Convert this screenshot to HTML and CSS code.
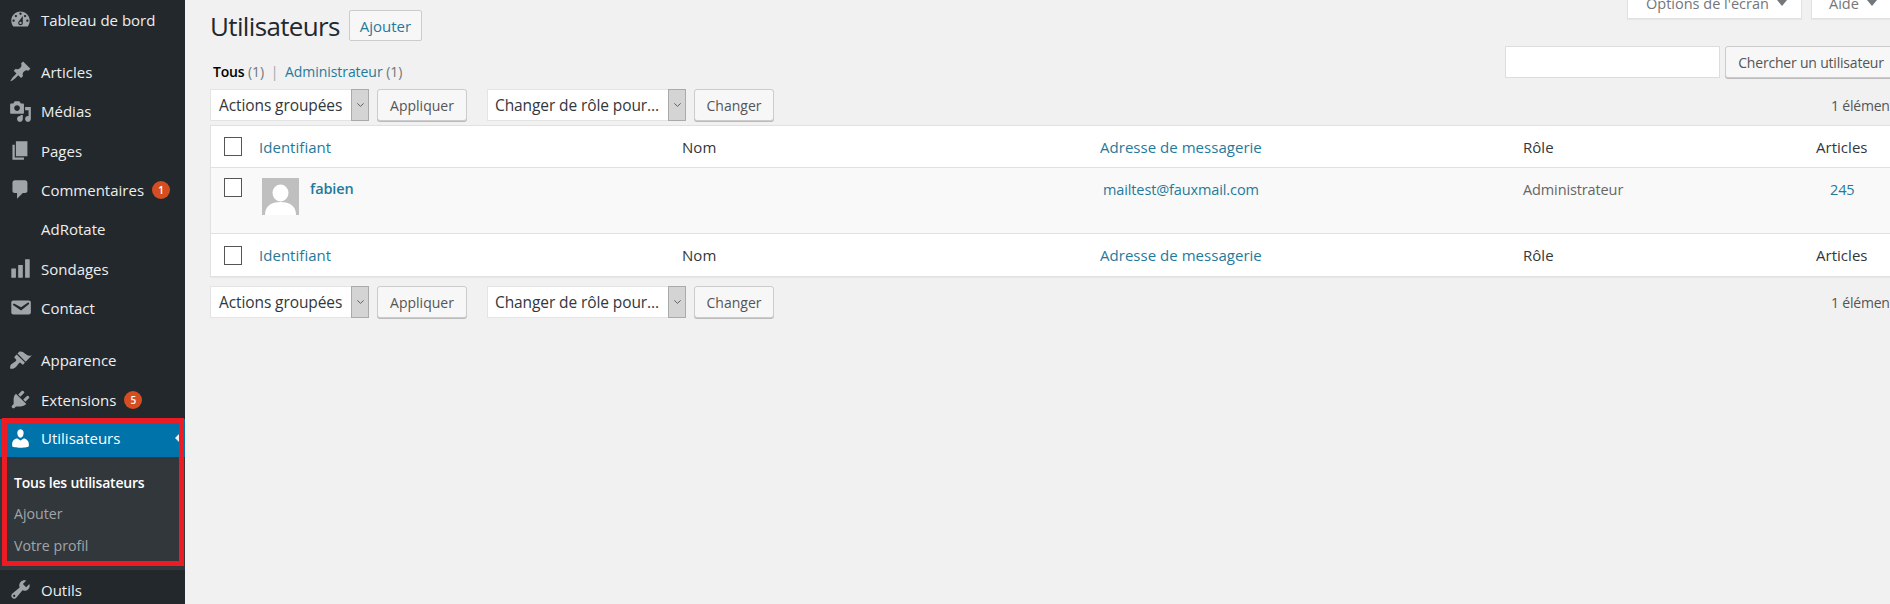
FILE: index.html
```html
<!DOCTYPE html>
<html lang="fr">
<head>
<meta charset="utf-8">
<title>Utilisateurs</title>
<link rel="stylesheet" href="styles.css">
</head>
<body>
<div class="page">
  <nav class="sidebar">
    <ul class="menu">
      <li class="item sep-after"><svg class="ic" viewBox="0 0 20 20"><path d="M3.76 16h12.48c1.1-1.37 1.76-3.11 1.76-5 0-4.42-3.58-8-8-8s-8 3.58-8 8c0 1.89.66 3.63 1.76 5zM10 4c.55 0 1 .45 1 1s-.45 1-1 1-1-.45-1-1 .45-1 1-1zM6 6c.55 0 1 .45 1 1s-.45 1-1 1-1-.45-1-1 .45-1 1-1zm8 0c.55 0 1 .45 1 1s-.45 1-1 1-1-.45-1-1 .45-1 1-1zm-5.37 5.55L12 7v6c0 1.1-.9 2-2 2s-2-.9-2-2c0-.57.24-1.08.63-1.45zM4 10c.55 0 1 .45 1 1s-.45 1-1 1-1-.45-1-1 .45-1 1-1zm12 0c.55 0 1 .45 1 1s-.45 1-1 1-1-.45-1-1 .45-1 1-1zm-5 3c0-.55-.45-1-1-1s-1 .45-1 1 .45 1 1 1 1-.45 1-1z"/></svg><span>Tableau de bord</span></li>
      <li class="item"><svg class="ic" viewBox="0 0 20 20"><path d="M10.44 3.02l1.82-1.82 6.36 6.35-1.83 1.82c-1.05-.68-2.48-.57-3.41.36l-.75.75c-.92.93-1.04 2.35-.35 3.41l-1.83 1.82-2.41-2.41-2.8 2.79c-.42.42-3.38 2.71-3.8 2.29s1.86-3.39 2.28-3.81l2.79-2.79L4.1 9.36l1.83-1.82c1.05.69 2.48.57 3.4-.36l.75-.75c.93-.92 1.05-2.35.36-3.41z"/></svg><span>Articles</span></li>
      <li class="item"><svg class="ic" viewBox="0 0 20 20"><path d="M13 11V4c0-.55-.45-1-1-1h-1.67L9 1H5L3.67 3H2c-.55 0-1 .45-1 1v7c0 .55.45 1 1 1h10c.55 0 1-.45 1-1zM7 4.500c1.38 0 2.500 1.12 2.500 2.500S8.380 9.500 7 9.500 4.500 8.380 4.500 7 5.620 4.500 7 4.500zM14 6h5v10.500c0 1.380-1.120 2.500-2.500 2.500S14 17.880 14 16.500s1.120-2.500 2.500-2.500c.17 0 .34.02.5.05V9h-3V6zm-4 8.050V13h2v3.500c0 1.380-1.120 2.500-2.500 2.500S7 17.880 7 16.500 8.120 14 9.500 14c.17 0 .34.02.5.05z"/></svg><span>Médias</span></li>
      <li class="item"><svg class="ic" viewBox="0 0 20 20"><path d="M6 15V2h10v13H6zm-1 1h8v2H3V5h2v11z"/></svg><span>Pages</span></li>
      <li class="item"><svg class="ic" viewBox="0 0 20 20"><path d="M5 2h9c1.1 0 2 .9 2 2v7c0 1.1-.9 2-2 2h-2l-5 5v-5H5c-1.1 0-2-.9-2-2V4c0-1.1.9-2 2-2z"/></svg><span>Commentaires</span><b class="badge">1</b></li>
      <li class="item"><span class="ic-blank"></span><span>AdRotate</span></li>
      <li class="item"><svg class="ic" viewBox="0 0 20 20"><path d="M18 18V2h-4v16h4zm-6 0V7H8v11h4zm-6 0v-8H2v8h4z"/></svg><span>Sondages</span></li>
      <li class="item sep-after"><svg class="ic" viewBox="0 0 20 20"><path d="M3.87 4h13.25C18.37 4 19 4.59 19 5.79v8.42c0 1.19-.63 1.79-1.88 1.79H3.87c-1.25 0-1.88-.6-1.88-1.79V5.79c0-1.2.63-1.79 1.88-1.79zm6.62 8.6l6.74-5.53c.24-.2.43-.66.13-1.07-.29-.41-.82-.42-1.17-.17l-5.7 3.86L4.8 6.83c-.35-.25-.88-.24-1.17.17-.3.41-.11.87.13 1.07z"/></svg><span>Contact</span></li>
      <li class="item"><svg class="ic" viewBox="0 0 20 20"><path d="M14.48 11.06L7.41 3.99l1.5-1.5c.5-.56 2.3-.47 3.51.32 1.21.8 1.43 1.28 2.91 2.1 1.18.64 2.45 1.26 4.45.85zm-.71.71L6.7 4.7 4.93 6.47c-.39.39-.39 1.02 0 1.41l1.06 1.06c.39.39.39 1.03 0 1.42-.6.6-1.43 1.11-2.21 1.69-.35.26-.7.53-1.01.84C1.43 13.23.64 15.03 1.08 17.11c2.08.44 3.88-.35 5.22-1.69.31-.31.58-.66.84-1.01.58-.78 1.09-1.61 1.69-2.21.39-.39 1.03-.39 1.42 0l1.06 1.06c.39.39 1.02.39 1.41 0z"/></svg><span>Apparence</span></li>
      <li class="item"><svg class="ic" viewBox="0 0 20 20"><path d="M13.11 4.36L9.87 7.6 8 5.73l3.24-3.24c.35-.34 1.05-.2 1.56.32.52.51.66 1.21.31 1.55zm-8 1.77l.91-1.12 9.01 9.01-1.19.84c-.71.71-2.63 1.16-3.82 1.16H6.14L4.9 17.26c-.59.59-1.54.59-2.12 0-.59-.58-.59-1.53 0-2.12l1.24-1.24v-3.88c0-1.13.4-3.19 1.09-3.89zm7.26 3.97l3.24-3.24c.34-.35 1.04-.21 1.55.31.52.51.66 1.21.31 1.55l-3.24 3.25z"/></svg><span>Extensions</span><b class="badge">5</b></li>
      <li class="item current"><svg class="ic" viewBox="0 0 20 20"><path d="M10 9.25c-2.27 0-2.73-3.44-2.73-3.44C7 4.02 7.82 2 9.97 2c2.16 0 2.98 2.02 2.71 3.81 0 0-.41 3.44-2.68 3.44zm0 2.57L12.72 10c2.39 0 4.52 2.33 4.52 4.53v2.49s-3.65 1.13-7.24 1.13c-3.65 0-7.24-1.13-7.24-1.13v-2.49c0-2.25 1.94-4.48 4.47-4.48z"/></svg><span>Utilisateurs</span><i class="pointer"></i></li>
      <li class="sub">
        <a class="sub-link on">Tous les utilisateurs</a>
        <a class="sub-link">Ajouter</a>
        <a class="sub-link">Votre profil</a>
      </li>
      <li class="item"><svg class="ic" viewBox="0 0 20 20"><path d="M16.68 9.77c-1.34 1.34-3.3 1.67-4.95.99l-5.41 6.52c-.99.99-2.59.99-3.58 0s-.99-2.59 0-3.57l6.52-5.42c-.68-1.65-.35-3.61.99-4.95 1.28-1.28 3.12-1.62 4.72-1.06l-2.89 2.89 2.82 2.82 2.86-2.87c.53 1.58.18 3.39-1.08 4.65zM3.81 16.21c.4.39 1.04.39 1.43 0 .4-.4.4-1.04 0-1.43-.39-.4-1.03-.4-1.43 0-.39.39-.39 1.03 0 1.43z"/></svg><span>Outils</span></li>
    </ul>
    <div class="highlight"></div>
  </nav>

  <main class="main">
    <header class="head">
      <div class="title-group">
        <h1 class="title">Utilisateurs</h1>
        <a class="add-btn">Ajouter</a>
      </div>
      <div class="tabs">
        <div class="tab tab-options">Options de l'écran <i class="caret"></i></div>
        <div class="tab tab-help">Aide <i class="caret"></i></div>
      </div>
    </header>

    <div class="filter-row">
      <div class="views"><strong>Tous</strong> <span class="count">(1)</span> <span class="pipe">|</span> <a class="link">Administrateur</a> <span class="count">(1)</span></div>
      <div class="search">
        <div class="search-input"></div>
        <div class="btn btn-search">Chercher un utilisateur</div>
      </div>
    </div>

    <div class="tablenav">
      <div class="select sel-bulk"><span>Actions groupées</span><i class="sel-arrow"><svg viewBox="0 0 10 6"><path d="M1.5 1.2 5 4.5l3.5-3.3"/></svg></i></div>
      <div class="btn btn-apply">Appliquer</div>
      <div class="select sel-role"><span>Changer de rôle pour…</span><i class="sel-arrow"><svg viewBox="0 0 10 6"><path d="M1.5 1.2 5 4.5l3.5-3.3"/></svg></i></div>
      <div class="btn btn-change">Changer</div>
      <div class="num">1 élément</div>
    </div>

    <table class="users">
      <colgroup><col class="c-cb"><col class="c-id"><col class="c-name"><col class="c-mail"><col class="c-role"><col class="c-posts"></colgroup>
      <thead>
        <tr class="rhead"><td><i class="cb"></i></td><th class="link">Identifiant</th><th>Nom</th><th class="link">Adresse de messagerie</th><th>Rôle</th><th>Articles</th></tr>
      </thead>
      <tbody>
        <tr class="rbody">
          <td><i class="cb"></i></td>
          <td>
            <div class="user">
              <svg class="avatar" viewBox="0 0 37 37"><rect width="37" height="37" fill="#bfbfbf"/><ellipse cx="18.500" cy="15" rx="8" ry="8.500" fill="#fff"/><path d="M3 37c0-9 6-13 15.500-13S34 28 34 37z" fill="#fff"/></svg>
              <a class="link uname">fabien</a>
            </div>
          </td>
          <td></td>
          <td><a class="link email">mailtest@fauxmail.com</a></td>
          <td class="muted">Administrateur</td>
          <td><a class="link posts">245</a></td>
        </tr>
      </tbody>
      <tfoot>
        <tr class="rfoot"><td><i class="cb"></i></td><th class="link">Identifiant</th><th>Nom</th><th class="link">Adresse de messagerie</th><th>Rôle</th><th>Articles</th></tr>
      </tfoot>
    </table>

    <div class="tablenav bottom">
      <div class="select sel-bulk"><span>Actions groupées</span><i class="sel-arrow"><svg viewBox="0 0 10 6"><path d="M1.5 1.2 5 4.5l3.5-3.3"/></svg></i></div>
      <div class="btn btn-apply">Appliquer</div>
      <div class="select sel-role"><span>Changer de rôle pour…</span><i class="sel-arrow"><svg viewBox="0 0 10 6"><path d="M1.5 1.2 5 4.5l3.5-3.3"/></svg></i></div>
      <div class="btn btn-change">Changer</div>
      <div class="num">1 élément</div>
    </div>
  </main>
</div>
</body>
</html>
```
FILE: styles.css
```css
* { box-sizing: border-box; }
html, body { margin: 0; padding: 0; height: 604px; overflow: hidden; }
body { font-family: "Open Sans", "Noto Sans", sans-serif; background: #f1f1f1; color: #444; font-size: 15px; }
.page { display: flex; width: 1897px; height: 604px; overflow: hidden; }

.sidebar { position: relative; flex: none; width: 185px; height: 604px; background: #23282d; overflow: hidden; }
.menu { list-style: none; margin: 0; padding: 0; }
.item { position: relative; display: flex; align-items: center; height: 39.33px; color: #eee; font-size: 15px; }
.item.sep-after { margin-bottom: 13px; }
.ic { flex: none; width: 23px; height: 23px; margin: 0 9px 0 9px; fill: #a0a5aa; }
.ic-blank { flex: none; width: 41px; }
.item.current { background: #0073aa; color: #fff; height: 38px; }
.item.current .ic { fill: #fff; }
.pointer { position: absolute; right: 5px; top: 50%; margin-top: -5px; border: 5px solid transparent; border-right-color: #f1f1f1; border-left: 0; }
.badge { display: flex; align-items: center; justify-content: center; width: 18px; height: 18px; margin-left: 8px; border-radius: 50%; background: #d54e21; color: #fff; font-size: 10px; font-weight: 600; }
.sub { display: flex; flex-direction: column; height: 113px; padding-top: 9px; background: #32373c; }
.sub-link { display: flex; align-items: center; height: 31.5px; padding-left: 14px; font-size: 14.2px; color: #a0a5aa; }
.sub-link.on { color: #fff; font-weight: 600; font-size: 14px; letter-spacing: -0.2px; }
.highlight { position: absolute; left: 2px; top: 418px; width: 182px; height: 148px; border: 5px solid #ed1c24; pointer-events: none; }

.main { flex: none; width: 1712px; padding-left: 25px; }
.head { display: flex; justify-content: space-between; height: 46px; }
.title-group { display: flex; align-items: flex-start; }
.title { margin: 9px 0 0; font-size: 26px; line-height: 34px; font-weight: 400; color: #23282d; letter-spacing: -0.65px; }
.add-btn { display: flex; align-items: center; height: 31px; margin: 10px 0 0 9px; padding: 0 10px; border: 1px solid #ccc; border-radius: 2px; background: #f7f7f7; color: #1f7a9c; font-size: 15px; }
.tabs { display: flex; gap: 9px; margin-top: -13px; align-items: flex-start; }
.tab { display: flex; align-items: center; height: 32px; background: #fff; border: 1px solid #e1e1e1; box-shadow: 0 1px 1px rgba(0,0,0,.04); color: #72777c; font-size: 14.5px; }
.tab-options { width: 175px; padding-left: 18px; }
.tab-help { width: 86px; padding-left: 17px; }
.caret { margin-left: 8px; border: 5px solid transparent; border-top: 6px solid #72777c; border-bottom: 0; }

.filter-row { display: flex; justify-content: space-between; align-items: flex-start; height: 43px; }
.views { margin-left: 3px; margin-top: 16px; font-size: 14px; color: #72777c; letter-spacing: -0.05px; }
.views strong { color: #000; font-weight: 600; letter-spacing: -0.2px; }
.pipe { margin: 0 3px; color: #a0a5aa; }
.link { color: #1f7a9c; font-weight: 400; }
.search { display: flex; gap: 5px; }
.search-input { width: 215px; height: 32px; background: #fff; border: 1px solid #ddd; }
.btn { flex: none; display: flex; align-items: center; justify-content: center; height: 32px; background: #f7f7f7; border: 1px solid #ccc; border-radius: 3px; box-shadow: 0 1px 0 #bbb; color: #555; font-size: 14px; }
.btn-search { width: 172px; letter-spacing: -0.2px; }

.tablenav { display: flex; align-items: center; height: 36px; padding-bottom: 4px; }
.select { flex: none; white-space: nowrap; display: flex; align-items: center; justify-content: space-between; height: 32px; background: #fff; border: 1px solid #e4e4e4; color: #32373c; font-size: 15.5px; padding-left: 8px; letter-spacing: -0.1px; }
.sel-role { padding-left: 7px; }
.sel-arrow { display: flex; align-items: center; justify-content: center; width: 18px; height: 32px; margin: 0 -1px 0 0; background: #d4d4d4; border: 1px solid #aaa; flex: none; }
.sel-arrow svg { width: 9px; height: 6px; fill: none; stroke: #555; stroke-width: 1; }
.sel-bulk { width: 159px; }
.sel-role { width: 199px; margin-left: 20px; }
.btn-apply { width: 90px; margin-left: 8px; }
.btn-change { width: 80px; margin-left: 8px; }
.num { margin-left: auto; width: 66px; color: #555; font-size: 14px; white-space: nowrap; letter-spacing: -0.2px; }
.tablenav.bottom { margin-top: 9px; }

.users { width: 1687px; table-layout: fixed; border-collapse: separate; border-spacing: 0; background: #fff; border: 1px solid #e1e1e1; border-right: 0; font-size: 15px; box-shadow: 0 1px 1px rgba(0,0,0,.04); }
.c-cb { width: 38px; } .c-id { width: 423px; } .c-name { width: 418px; } .c-mail { width: 423px; } .c-role { width: 293px; } .c-posts { width: 92px; }
.users th, .users td { padding: 0 0 0 10px; text-align: left; vertical-align: middle; }
.users th { font-weight: 400; color: #32373c; letter-spacing: 0.03px; }
.users th.link { color: #1f7a9c; }
.users td:first-child { padding-left: 13px; }
.rhead td, .rhead th { height: 42px; border-bottom: 1px solid #e1e1e1; }
.rfoot td, .rfoot th { height: 43px; border-top: 1px solid #e1e1e1; }
.rbody td { height: 65px; background: #f9f9f9; vertical-align: top; padding-top: 12px; font-size: 14.5px; letter-spacing: -0.12px; }
.cb { display: block; width: 18px; height: 19px; border: 1px solid #555; background: #fff; }
.rbody td:first-child { padding-top: 10px; }
.user { display: flex; margin-top: -2px; margin-left: 3px; }
.avatar { width: 37px; height: 37px; flex: none; }
.uname { margin-left: 11px; margin-top: 1px; font-weight: 600; }
.email { margin-left: 3px; }
.muted { color: #666; }
.posts { margin-left: 14px; }
```
